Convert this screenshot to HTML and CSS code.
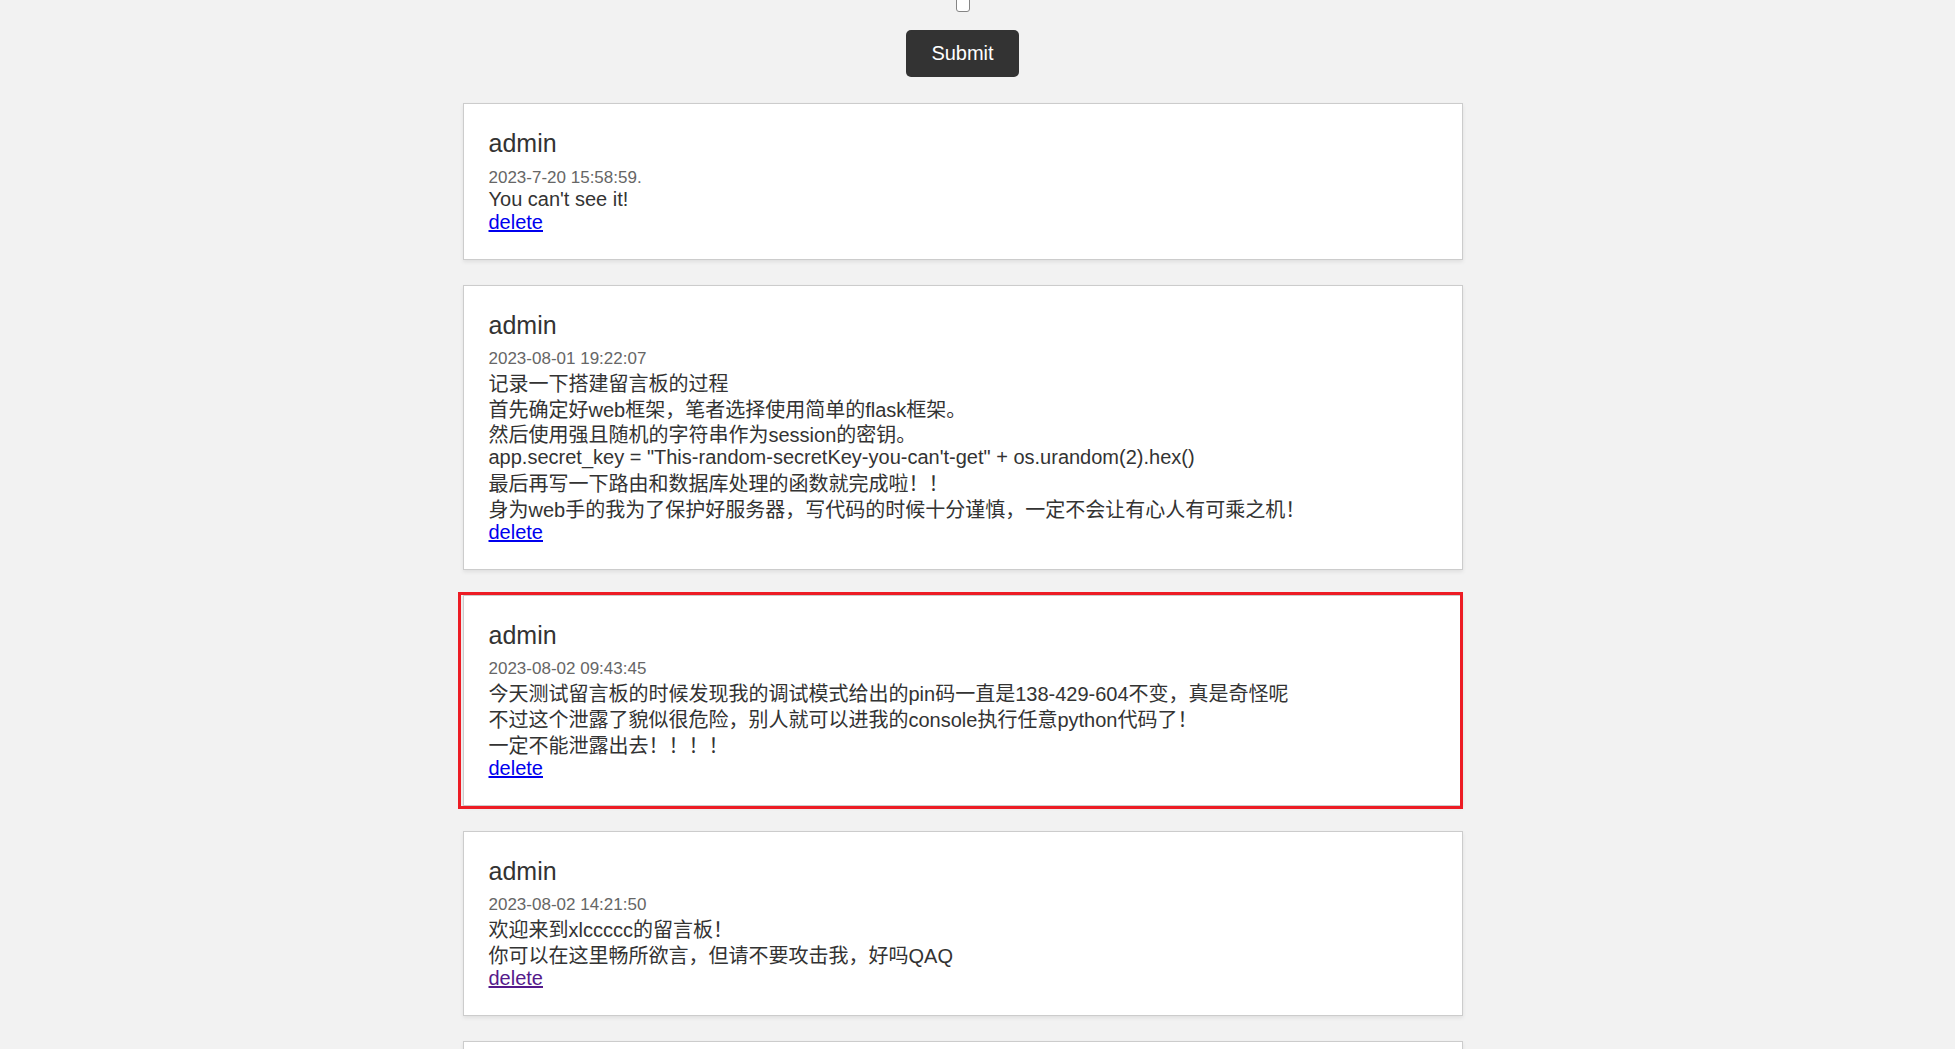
FILE: index.html
```html
<!DOCTYPE html>
<html lang="zh-CN">
<head>
<meta charset="utf-8">
<title>留言板</title>
<link rel="stylesheet" href="styles.css">
</head>
<body>
<div class="page">
  <form class="post-form">
    <input type="checkbox" class="check">
    <button type="button" class="submit">Submit</button>
  </form>
  <div class="messages">
    <div class="message">
      <h3 class="author">admin</h3>
      <div class="date">2023-7-20 15:58:59.</div>
      <div class="content">
        <div class="line latin">You can't see it!</div>
      </div>
      <a class="delete" href="#">delete</a>
    </div>
    <div class="message">
      <h3 class="author">admin</h3>
      <div class="date">2023-08-01 19:22:07</div>
      <div class="content">
        <div class="line">记录一下搭建留言板的过程</div>
        <div class="line">首先确定好web框架，笔者选择使用简单的flask框架。</div>
        <div class="line">然后使用强且随机的字符串作为session的密钥。</div>
        <div class="line latin">app.secret_key = "This-random-secretKey-you-can't-get" + os.urandom(2).hex()</div>
        <div class="line">最后再写一下路由和数据库处理的函数就完成啦！！</div>
        <div class="line">身为web手的我为了保护好服务器，写代码的时候十分谨慎，一定不会让有心人有可乘之机！</div>
      </div>
      <a class="delete" href="#">delete</a>
    </div>
    <div class="message marked">
      <h3 class="author">admin</h3>
      <div class="date">2023-08-02 09:43:45</div>
      <div class="content">
        <div class="line">今天测试留言板的时候发现我的调试模式给出的pin码一直是138-429-604不变，真是奇怪呢</div>
        <div class="line">不过这个泄露了貌似很危险，别人就可以进我的console执行任意python代码了！</div>
        <div class="line">一定不能泄露出去！！！！</div>
      </div>
      <a class="delete" href="#">delete</a>
    </div>
    <div class="message">
      <h3 class="author">admin</h3>
      <div class="date">2023-08-02 14:21:50</div>
      <div class="content">
        <div class="line">欢迎来到xlccccc的留言板！</div>
        <div class="line">你可以在这里畅所欲言，但请不要攻击我，好吗QAQ</div>
      </div>
      <a class="delete visited" href="#">delete</a>
    </div>
    <div class="message">
      <h3 class="author">admin</h3>
      <div class="date">2023-08-03 10:00:00</div>
      <div class="content">
        <div class="line">留言</div>
      </div>
      <a class="delete" href="#">delete</a>
    </div>
  </div>
</div>
</body>
</html>
```

FILE: styles.css
```css
html, body {
  margin: 0;
  padding: 0;
}

body {
  background: #f2f2f2;
  font-family: "Liberation Sans", Arial, "Noto Sans CJK SC", sans-serif;
  color: #333;
  font-size: 20px;
  line-height: 23px;
  overflow: hidden;
  height: 1049px;
}

.page {
  padding-right: 30px;
}

.post-form {
  display: flex;
  flex-direction: column;
  align-items: center;
  margin: 0;
}

.check {
  appearance: none;
  -webkit-appearance: none;
  box-sizing: border-box;
  width: 14px;
  height: 15px;
  margin: -3px 0 0 0;
  border: 1px solid #858585;
  border-radius: 3px;
  background: #fff;
}

.submit {
  margin-top: 18px;
  padding: 12px 25px;
  border: none;
  border-radius: 5px;
  background: #333;
  color: #fff;
  font-family: "Liberation Sans", Arial, sans-serif;
  font-size: 20px;
  line-height: 23px;
}

.messages {
  width: 1000px;
  margin: 26px auto 0;
  display: flex;
  flex-direction: column;
  gap: 25px;
}

.message {
  position: relative;
  box-sizing: border-box;
  width: 1000px;
  background: #fff;
  border: 1px solid #cccccc;
  padding: 26px 25px 25px;
  box-shadow: 0 2px 4px rgba(0, 0, 0, 0.08);
}

.author {
  margin: 0 0 10.5px;
  font-size: 25px;
  line-height: 27px;
  font-weight: normal;
  color: #333;
}

.date {
  font-size: 17px;
  line-height: 20px;
  color: #666;
}

.content {
  color: #333;
}

.line {
  padding-top: 4.75px;
  line-height: 21px;
  white-space: nowrap;
}

.line.latin {
  padding-top: 0;
  line-height: 23px;
}

.delete {
  display: inline-block;
  color: #0000ee;
  text-decoration: underline;
  line-height: 23px;
}

.delete.visited {
  color: #551a8b;
}

.marked::after {
  content: "";
  position: absolute;
  left: -6px;
  right: -1px;
  top: -4px;
  bottom: -4px;
  border: 3.5px solid #ed1c24;
  pointer-events: none;
}
```
